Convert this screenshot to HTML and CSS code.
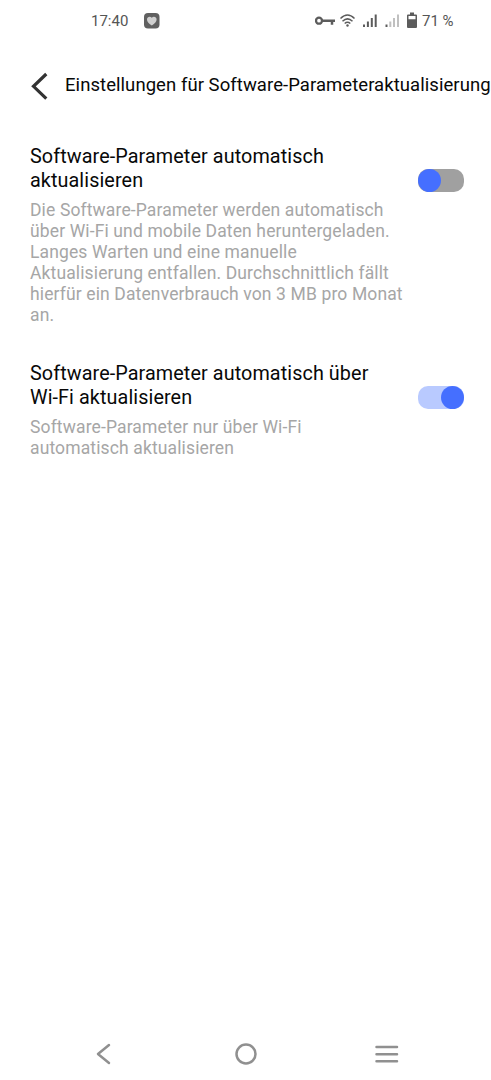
FILE: index.html
```html
<!DOCTYPE html>
<html lang="de">
<head>
<meta charset="utf-8">
<title>Einstellungen</title>
<link rel="stylesheet" href="styles.css">
</head>
<body>
<div class="screen">
  <div class="status">
    <span class="time">17:40</span>
    <svg class="app" width="16" height="16" viewBox="0 0 16 16"><rect width="15.500" height="15.500" rx="4" fill="#606060"/><path d="M7.800 12.500C4.500 10.300 3 8.500 3 6.500C3 3.600 6.300 3 7.800 4.800C9.300 3 12.600 3.600 12.600 6.500C12.600 8.500 11 10.300 7.800 12.500Z" fill="#d0d0d0"/></svg>
    <svg class="signals" width="103" height="18" viewBox="315 12 103 18">
      <g fill="none" stroke="#5c5c5c"><circle cx="319" cy="20.700" r="3" stroke-width="2.300"/><path d="M322 20.700H335M332 20.700V24.800" stroke-width="2.500"/>
      <path d="M340.500 18.500Q347.500 11.500 354.500 18.500M342.500 21.200Q347.500 16.500 352.500 21.200M344.700 23.500Q347.500 21 350.300 23.500" stroke-width="1.500"/></g>
      <circle cx="347.500" cy="25.500" r="1.200" fill="#5c5c5c"/>
      <path d="M363 24.500h2v2.500h-2zM366.900 21.500h2v5.500h-2zM370.800 18h2v9h-2zM374.700 14.500h2v12.500h-2z" fill="#5c5c5c"/>
      <path d="M385.500 24.500h2v2.500h-2z" fill="#5c5c5c"/><path d="M389.300 21.500h2v5.500h-2zM393 18h2v9h-2zM397 14.500h2v12.500h-2z" fill="#c0c0c0"/>
      <path fill-rule="evenodd" d="M410 12.500h4v2h2q1 0 1 1v11.500q0 1-1 1h-8q-1 0-1-1V15.500q0-1 1-1h2zM408.500 16v3.300h7V16z" fill="#5c5c5c"/>
    </svg>
    <span class="percent">71 %</span>
  </div>
  <header class="header">
    <svg width="18" height="28" viewBox="0 0 18 28"><path d="M16.300 2L3.500 14.300L16.300 26.600" fill="none" stroke="#333" stroke-width="3.200"/></svg>
    <h1>Einstellungen für Software-Parameteraktualisierung</h1>
  </header>
  <main>
    <section class="setting">
      <div class="copy"><h2>Software-Parameter automatisch<br>aktualisieren</h2>
      <p>Die Software-Parameter werden automatisch<br>über Wi-Fi und mobile Daten heruntergeladen.<br>Langes Warten und eine manuelle<br>Aktualisierung entfallen. Durchschnittlich fällt<br>hierfür ein Datenverbrauch von 3 MB pro Monat<br>an.</p></div>
      <span class="toggle"></span>
    </section>
    <section class="setting second">
      <div class="copy"><h2>Software-Parameter automatisch über<br>Wi-Fi aktualisieren</h2>
      <p>Software-Parameter nur über Wi-Fi<br>automatisch aktualisieren</p></div>
      <span class="toggle on"></span>
    </section>
  </main>
  <nav class="nav">
    <svg width="24" height="24" viewBox="0 0 24 24"><path d="M17 3L6 12L17 21"/></svg>
    <svg width="24" height="24" viewBox="0 0 24 24"><circle cx="12" cy="12" r="9.500"/></svg>
    <svg width="24" height="24" viewBox="0 0 24 24"><path d="M1.500 5H22M1.500 12.200H22M1.500 19.300H22"/></svg>
  </nav>
</div>
</body>
</html>
```
FILE: styles.css
```css
* { box-sizing: border-box; }
body { margin: 0; background: #fff; font-family: Roboto, sans-serif; }
.screen { height: 1080px; width: 491px; overflow: hidden; display: flex; flex-direction: column; }
.status { height: 41px; padding-left: 91px; display: flex; align-items: center; color: #555; font-size: 15px; flex: none; }
.time { width: 38px; margin-right: 15px; white-space: nowrap; }
.signals { margin-left: 155px; }
.percent { margin-left: 4px; white-space: nowrap; }
.header { height: 90px; padding-left: 30px; display: flex; align-items: center; flex: none; }
.header svg { flex: none; margin-right: 17px; }
h1 { margin: -2px 0 0; font-size: 18.500px; font-weight: 400; line-height: 24px; letter-spacing: 0.060px; color: #080808; white-space: nowrap; }
main { flex: 1; padding: 14px 27.500px 0 30px; }
.setting { display: flex; justify-content: space-between; }
.second { margin-top: 36px; }
.copy { white-space: nowrap; }
h2 { margin: 0; font-size: 19.800px; font-weight: 400; line-height: 24px; letter-spacing: 0.090px; color: #080808; }
p { margin: 7px 0 0; font-size: 17.500px; line-height: 21px; letter-spacing: 0.130px; color: #a6a6a6; }
.toggle { flex: none; width: 46px; height: 23px; margin-top: 24px; border-radius: 10px; background: #a0a0a0; display: flex; }
.toggle::before { content: ""; width: 23px; height: 23px; border-radius: 50%; background: #456fff; }
.on { background: #b9caff; justify-content: flex-end; margin-top: 23.500px; }
.nav { height: 53px; padding: 0 92px; display: flex; justify-content: space-between; align-items: center; flex: none; }
.nav svg { fill: none; stroke: #909090; stroke-width: 2.500; stroke-linecap: round; stroke-linejoin: round; }
```
